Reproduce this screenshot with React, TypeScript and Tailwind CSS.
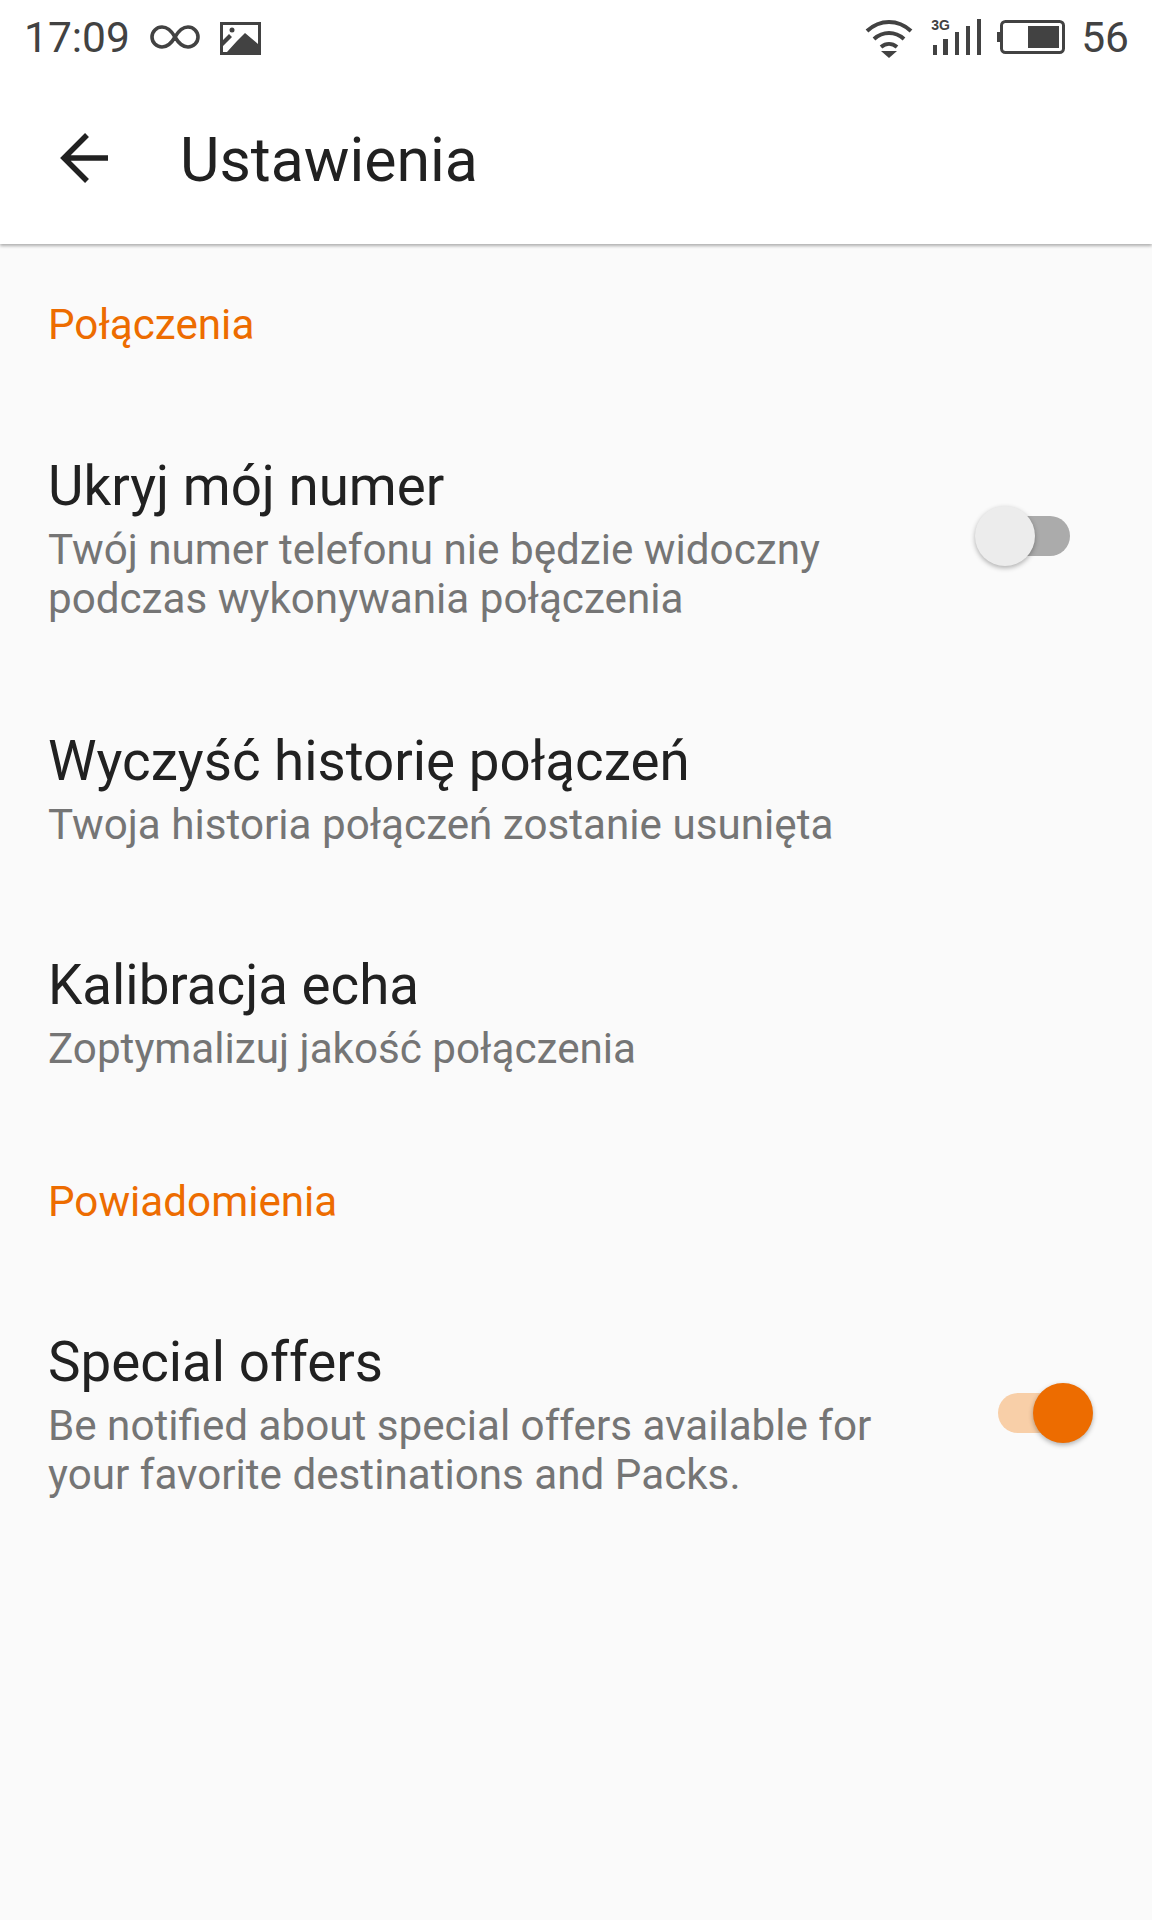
import React from 'react';

const Row: React.FC<{ title: string; lines: string[]; toggle?: React.ReactNode; className?: string }> = ({ title, lines, toggle, className }) => (
  <div className={`relative flex items-center justify-between pl-[48px] ${className ?? ''}`}>
    <div>
      <div className="text-[54.7px] leading-[64px] text-[#212121]">{title}</div>
      <div className="mt-[7px] text-[42.2px] leading-[49px] text-[#757575]">
        {lines.map((l) => (
          <div key={l}>{l}</div>
        ))}
      </div>
    </div>
    {toggle}
  </div>
);

const SwitchOff = () => (
  <div className="relative mr-[82px] mt-[-6px] h-[40px] w-[86px] rounded-full bg-[#ababab]">
    <div className="absolute left-[-9px] top-[-10px] h-[60px] w-[60px] rounded-full bg-[#ececec] shadow-[0_2px_5px_rgba(0,0,0,0.3)]" />
  </div>
);

const SwitchOn = () => (
  <div className="relative mr-[68px] mt-[-4px] h-[40px] w-[86px] rounded-full bg-[#f8cfa8]">
    <div className="absolute right-[-9px] top-[-10px] h-[60px] w-[60px] rounded-full bg-[#ed6c00] shadow-[0_2px_5px_rgba(0,0,0,0.3)]" />
  </div>
);

export default function App() {
  return (
    <div className="h-[1920px] w-[1152px] overflow-hidden bg-[#fafafa] font-['Roboto',sans-serif]">
      <div className="relative z-10 h-[244px] bg-white shadow-[0_2px_3px_rgba(0,0,0,0.3)]">
        <div className="flex h-[74px] items-center justify-between pl-[24px] pr-[23px] text-[42.5px] text-[#424242]">
          <div className="flex items-center">
            <span className="mt-[2px] leading-[74px]">17:09</span>
            <svg className="ml-[20px]" width="50" height="26" viewBox="0 0 50 26" fill="none" stroke="#424242" strokeWidth="3.6">
              <path d="M25 13C21 6 17 3 12 3a10 10 0 0 0 0 20c5 0 9-3 13-10s8-10 13-10a10 10 0 0 1 0 20c-5 0-9-3-13-10z" />
            </svg>
            <svg className="ml-[20px] mt-[2px]" width="41" height="33" viewBox="0 0 41 33">
              <path fill="#424242" fillRule="evenodd" d="M0 0h41v33H0zM3 3v15l6-6 3 3-9 9v6h4l10-11 8-8 13 11V3z" />
              <circle cx="12" cy="8" r="2.5" fill="#424242" />
            </svg>
          </div>
          <div className="flex items-center">
            <svg className="mt-[1px]" width="48" height="40" viewBox="0 0 48 40" fill="none" stroke="#424242" strokeWidth="4">
              <path d="M2 13c13-12 31-12 44 0M9 21c9-8 21-8 30 0M16 29c5-4 11-4 16 0" />
              <path d="M16 33h16l-8 7z" fill="#424242" stroke="none" />
            </svg>
            <div className="relative ml-[16px] h-[40px] w-[52px]">
              <span className="absolute left-[2px] top-[1px] font-['Liberation_Sans',sans-serif] text-[14px] font-bold leading-[14px] text-[#424242]">3G</span>
              <svg className="absolute left-0 top-0" width="52" height="40" viewBox="0 0 52 40" fill="#424242">
                <rect x="4" y="28" width="4" height="10" />
                <rect x="14" y="22" width="5" height="16" />
                <rect x="26" y="15" width="4" height="23" />
                <rect x="37" y="9" width="4" height="29" />
                <rect x="48" y="2" width="4" height="36" />
              </svg>
            </div>
            <svg className="ml-[16px]" width="68" height="34" viewBox="0 0 68 34">
              <rect x="4.5" y="1.5" width="62" height="31" rx="4" fill="none" stroke="#424242" strokeWidth="3" />
              <rect x="0" y="12" width="3" height="10" fill="#424242" />
              <rect x="31" y="6" width="31" height="22" fill="#424242" />
            </svg>
            <span className="ml-[16px] mt-[2px] leading-[74px]">56</span>
          </div>
        </div>
        <div className="flex h-[170px] items-center">
          <svg className="ml-[55px] mt-[-2px]" width="60" height="60" viewBox="0 0 60 60" fill="none" stroke="#212121" strokeWidth="5.5">
            <path d="M53 30H9M32 7L9 30l23 23" />
          </svg>
          <span className="ml-[65px] mt-[4px] text-[60.8px] leading-[72px] text-[#212121]">Ustawienia</span>
        </div>
      </div>

      <div className="pl-[48px] pt-[56px] text-[42.2px] leading-[49px] text-[#ed6c00]">Połączenia</div>
      <Row
        className="mt-[105px]"
        title="Ukryj mój numer"
        lines={['Twój numer telefonu nie będzie widoczny', 'podczas wykonywania połączenia']}
        toggle={<SwitchOff />}
      />
      <Row className="mt-[106px]" title="Wyczyść historię połączeń" lines={['Twoja historia połączeń zostanie usunięta']} />
      <Row className="mt-[104px]" title="Kalibracja echa" lines={['Zoptymalizuj jakość połączenia']} />
      <div className="mt-[104px] pl-[48px] text-[42.2px] leading-[49px] text-[#ed6c00]">Powiadomienia</div>
      <Row
        className="mt-[104px]"
        title="Special offers"
        lines={['Be notified about special offers available for', 'your favorite destinations and Packs.']}
        toggle={<SwitchOn />}
      />
    </div>
  );
}
